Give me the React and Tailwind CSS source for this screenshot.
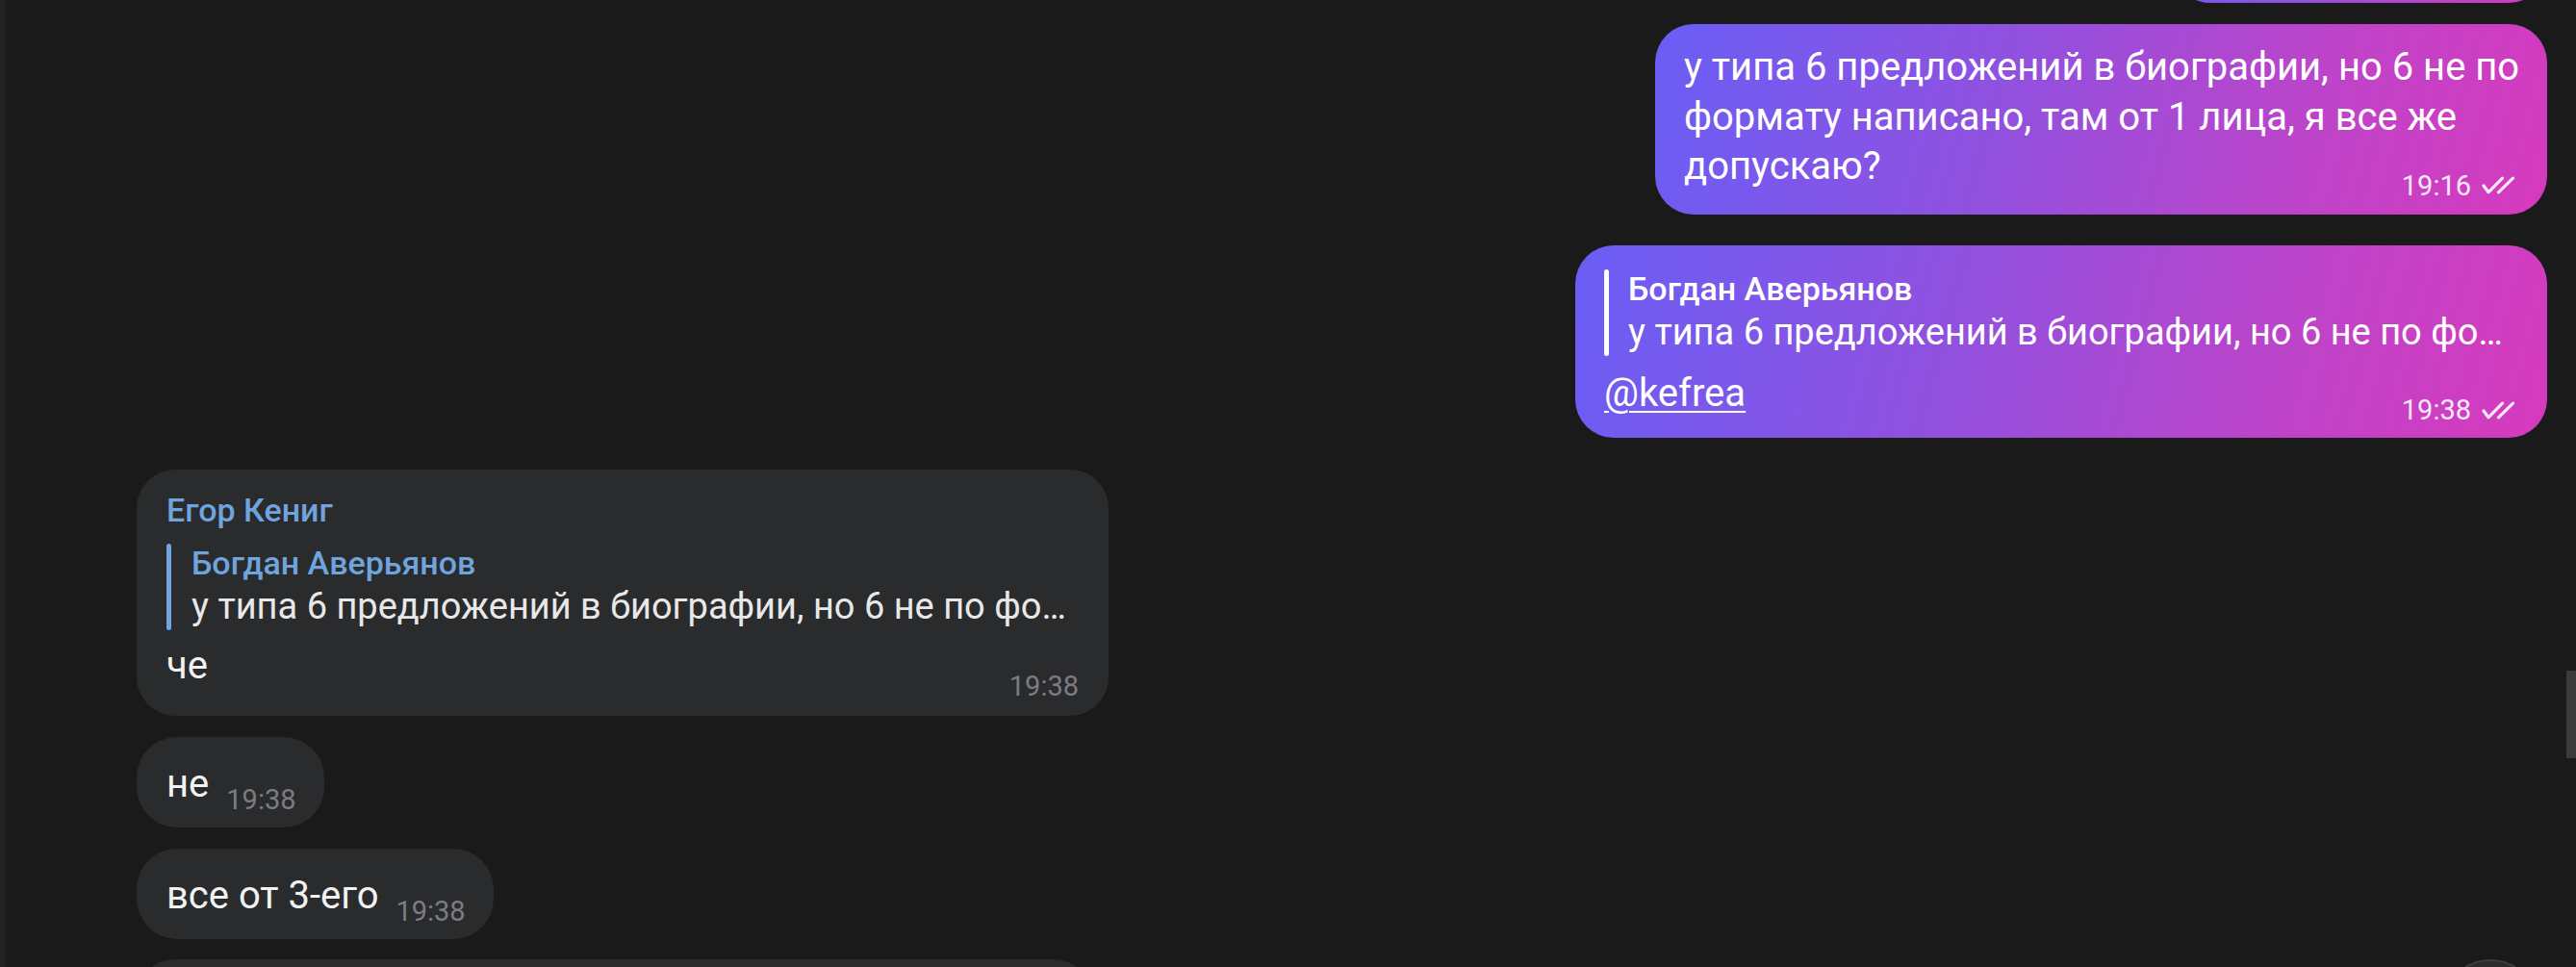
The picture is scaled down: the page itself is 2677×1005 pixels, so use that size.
import React from "react";

function DoubleCheck() {
  return (
    <svg width="35" height="19" viewBox="0 0 35 19" fill="none" stroke="currentColor" strokeWidth="3.2" strokeLinecap="round" strokeLinejoin="round">
      <path d="M2 10 L7 16.8 L21.5 2.2" />
      <path d="M17.5 16.8 L32.5 2.2" />
    </svg>
  );
}

const grad = "bg-[linear-gradient(105deg,#6a5ef5_0%,#9250de_40%,#c043c8_75%,#d63abd_100%)]";

function OutTime({ t }) {
  return (
    <div className="flex h-[32px] items-center justify-end gap-[11px] text-[29px] leading-[32px] text-[#f8e8fa]">
      <span>{t}</span>
      <DoubleCheck />
    </div>
  );
}

export default function App() {
  return (
    <div className="relative flex h-[1005px] w-[2677px] overflow-hidden bg-[#1a1a1a] font-['Roboto',sans-serif]">
      <div className="w-[6px] shrink-0 bg-[#222222]" />
      <div className="flex flex-1 flex-col pl-[136px] pr-[30px]">
        {/* partially visible outgoing bubble */}
        <div className={`-mt-[117px] h-[120px] w-[390px] shrink-0 self-end rounded-[40px] ${grad}`} />

        {/* outgoing 1 */}
        <div className={`mt-[22px] w-[927px] shrink-0 self-end rounded-[40px] pb-[14px] pl-[30px] pr-[33px] pt-[19px] text-white ${grad}`}>
          <p className="whitespace-nowrap text-[40px] leading-[51.5px]">
            у типа 6 предложений в биографии, но 6 не по
            <br />
            формату написано, там от 1 лица, я все же
            <br />
            допускаю?
          </p>
          <div className="-mt-[22px]">
            <OutTime t="19:16" />
          </div>
        </div>

        {/* outgoing 2 (reply) */}
        <div className={`mt-[32px] w-[1010px] shrink-0 self-end rounded-[40px] pb-[13px] pl-[30px] pr-[33px] pt-[25px] text-white ${grad}`}>
          <div className="flex">
            <div className="w-[5px] shrink-0 rounded-full bg-white" />
            <div className="min-w-0 pl-[20px]">
              <div className="text-[34px] font-medium leading-[40px]">Богдан Аверьянов</div>
              <div className="whitespace-nowrap text-[38px] leading-[50px]">у типа 6 предложений в биографии, но 6 не по фо…</div>
            </div>
          </div>
          <div className="mt-[13px] text-[40px] leading-[51.5px]">
            <span className="underline decoration-[2px] underline-offset-[5px]">@kefrea</span>
          </div>
          <div className="-mt-[24px]">
            <OutTime t="19:38" />
          </div>
        </div>

        {/* incoming 1 (reply) */}
        <div className="mt-[33px] w-[1010px] shrink-0 self-start rounded-[40px] bg-[#2a2b2d] pb-[15px] pl-[31px] pr-[31px] pt-[22px]">
          <div className="text-[34px] font-medium leading-[40px] text-[#6fa4de]">Егор Кениг</div>
          <div className="mt-[15px] flex">
            <div className="w-[5px] shrink-0 rounded-full bg-[#6fa4de]" />
            <div className="min-w-0 pl-[21px]">
              <div className="text-[34px] font-medium leading-[40px] text-[#6fa4de]">Богдан Аверьянов</div>
              <div className="whitespace-nowrap text-[38px] leading-[50px] text-[#e8e8e8]">у типа 6 предложений в биографии, но 6 не по фо…</div>
            </div>
          </div>
          <div className="mt-[11px] text-[40px] leading-[51.5px] text-[#f2f2f2]">че</div>
          <div className="-mt-[21px] flex h-[32px] justify-end text-[29px] leading-[32px] text-[#7c7d80]">19:38</div>
        </div>

        {/* incoming 2 */}
        <div className="mt-[22px] flex h-[94px] w-fit shrink-0 items-start rounded-[42px] bg-[#2a2b2d] pl-[31px] pr-[29px] pt-[23px]">
          <span className="text-[40px] leading-[51.5px] text-[#f2f2f2]">не</span>
          <span className="ml-[18px] mt-[26px] text-[29px] leading-[32px] text-[#7c7d80]">19:38</span>
        </div>

        {/* incoming 3 */}
        <div className="mt-[22px] flex h-[94px] w-fit shrink-0 items-start rounded-[42px] bg-[#2a2b2d] pl-[31px] pr-[29px] pt-[23px]">
          <span className="text-[40px] leading-[51.5px] text-[#f2f2f2]">все от 3-его</span>
          <span className="ml-[18px] mt-[26px] text-[29px] leading-[32px] text-[#7c7d80]">19:38</span>
        </div>

        {/* partially visible incoming */}
        <div className="mt-[21px] h-[100px] w-[993px] shrink-0 self-start rounded-[40px] bg-[#2a2b2d]" />
      </div>

      {/* scrollbar */}
      <div className="absolute right-0 top-[697px] h-[91px] w-[10px] bg-[#3b3b3b]" />

      {/* scroll-to-bottom button */}
      <div className="absolute left-[2538px] top-[997px] h-[100px] w-[100px] rounded-full border-2 border-[#3c3d40] bg-[#2a2b2d]" />
    </div>
  );
}
